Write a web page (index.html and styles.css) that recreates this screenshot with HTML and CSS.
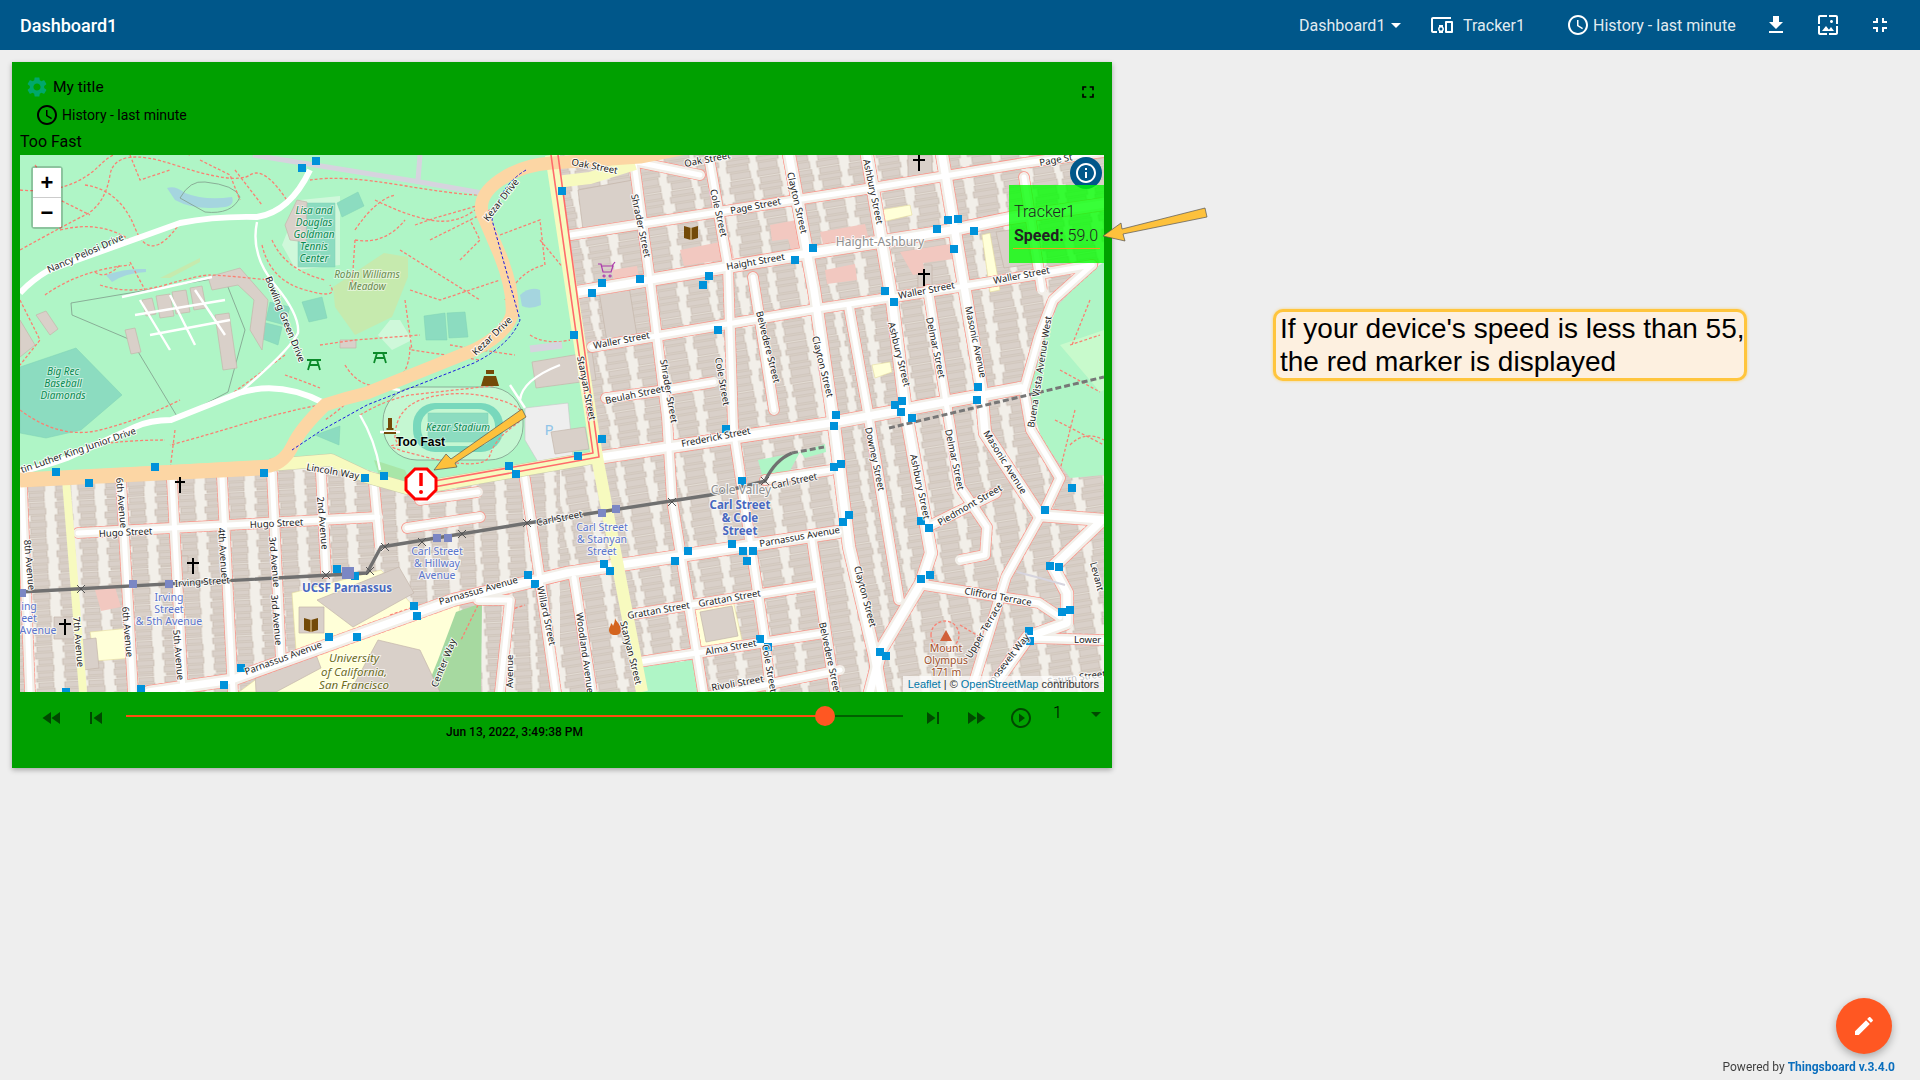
FILE: index.html
```html
<!DOCTYPE html>
<html lang="en">
<head>
    <meta charset="UTF-8">
    <title>Dashboard1</title>
    <link rel="stylesheet" href="styles.css">
</head>
<body>

    <!-- Shared material icons -->
    <svg class="icon-defs">
        <symbol id="i-clock" viewBox="0 0 24 24"><path d="M11.99 2C6.47 2 2 6.48 2 12s4.47 10 9.99 10C17.52 22 22 17.52 22 12S17.52 2 11.99 2zM12 20c-4.42 0-8-3.58-8-8s3.58-8 8-8 8 3.58 8 8-3.58 8-8 8zm.5-13H11v6l5.25 3.15.75-1.23-4.5-2.67z"/></symbol>
    </svg>

    <!-- Header -->
    <header class="topbar">
        <div class="topbar-title">Dashboard1</div>
        <nav class="topbar-tools">
            <span class="tool tool-state">Dashboard1<i class="caret"></i></span>
            <span class="tool tool-entity">
                <svg class="icon-devices" viewBox="0 0 24 24"><path d="M3 6h18V4H3c-1.1 0-2 .9-2 2v12c0 1.1.9 2 2 2h4v-2H3V6zm10 6H9v1.78c-.61.55-1 1.33-1 2.22s.39 1.67 1 2.22V20h4v-1.78c.61-.55 1-1.34 1-2.22s-.39-1.67-1-2.22V12zm-2 5.5c-.83 0-1.5-.67-1.5-1.5s.67-1.5 1.5-1.5 1.5.67 1.5 1.5-.67 1.5-1.5 1.5zM22 8h-6c-.5 0-1 .5-1 1v10c0 .5.5 1 1 1h6c.5 0 1-.5 1-1V9c0-.5-.5-1-1-1zm-1 10h-4v-8h4v8z"/></svg>
                Tracker1
            </span>
            <span class="tool tool-time">
                <svg class="icon-clock"><use href="#i-clock"/></svg>
                History - last minute
            </span>
            <svg class="tool-btn btn-download" viewBox="0 0 24 24"><path d="M19 9h-4V3H9v6H5l7 7 7-7zM5 18v2h14v-2H5z"/></svg>
            <svg class="tool-btn btn-image" viewBox="0 0 24 24"><path d="M4 4h7V2H4c-1.1 0-2 .9-2 2v7h2V4zm6 9l-4 5h12l-3-4-2.03 2.71L10 13zm7-4.5c0-.83-.67-1.5-1.5-1.5S14 7.67 14 8.5s.67 1.5 1.5 1.5S17 9.33 17 8.5zM20 2h-7v2h7v7h2V4c0-1.1-.9-2-2-2zm0 18h-7v2h7c1.1 0 2-.9 2-2v-7h-2v7zM4 13H2v7c0 1.1.9 2 2 2h7v-2H4v-7z"/></svg>
            <svg class="tool-btn btn-exit" viewBox="0 0 24 24"><path d="M5 16h3v3h2v-5H5v2zm3-8H5v2h5V5H8v3zm6 11h2v-3h3v-2h-5v5zm2-11V5h-2v5h5V8h-3z"/></svg>
        </nav>
    </header>

    <!-- Main Content -->
    <main class="content">
        <section class="card">
            <div class="card-head">
                <svg class="icon-gear" viewBox="0 0 24 24"><path d="M19.14,12.94c0.04-0.3,0.06-0.61,0.06-0.94c0-0.32-0.02-0.64-0.07-0.94l2.03-1.58c0.18-0.14,0.23-0.41,0.12-0.61 l-1.92-3.32c-0.12-0.22-0.37-0.29-0.59-0.22l-2.39,0.96c-0.5-0.38-1.03-0.7-1.62-0.94L14.4,2.81c-0.04-0.24-0.24-0.41-0.48-0.41 h-3.84c-0.24,0-0.43,0.17-0.47,0.41L9.25,5.35C8.66,5.59,8.12,5.92,7.63,6.29L5.24,5.33c-0.22-0.08-0.47,0-0.59,0.22L2.74,8.87 C2.62,9.08,2.66,9.34,2.86,9.48l2.03,1.58C4.84,11.36,4.8,11.69,4.8,12s0.02,0.64,0.07,0.94l-2.03,1.58 c-0.18,0.14-0.23,0.41-0.12,0.61l1.92,3.32c0.12,0.22,0.37,0.29,0.59,0.22l2.39-0.96c0.5,0.38,1.03,0.7,1.62,0.94l0.36,2.54 c0.05,0.24,0.24,0.41,0.48,0.41h3.84c0.24,0,0.44-0.17,0.47-0.41l0.36-2.54c0.59-0.24,1.13-0.56,1.62-0.94l2.39,0.96 c0.22,0.08,0.47,0,0.59-0.22l1.92-3.32c0.12-0.22,0.07-0.47-0.12-0.61L19.14,12.94z M12,15.6c-1.98,0-3.6-1.62-3.6-3.6 s1.62-3.6,3.6-3.6s3.6,1.62,3.6,3.6S13.98,15.6,12,15.6z"/></svg>
                <span class="card-title">My title</span>
                <svg class="icon-full" viewBox="0 0 24 24"><path d="M7 14H5v5h5v-2H7v-3zm-2-4h2V7h3V5H5v5zm12 7h-3v2h5v-5h-2v3zM14 5v2h3v3h2V5h-5z"/></svg>
            </div>
            <div class="card-time">
                <svg class="icon-clock"><use href="#i-clock"/></svg>
                History - last minute
            </div>
            <div class="card-label">Too Fast</div>

            <!-- Map -->
            <div class="map">
                <svg class="map-svg" viewBox="20 155 1084 537">
                    <defs>
                        <pattern id="houses-east" width="60" height="42" patternUnits="userSpaceOnUse" patternTransform="rotate(-9)">
                            <g class="house">
                                <rect x="3" y="0" width="20" height="6"/><rect x="1" y="7" width="23" height="5"/><rect x="4" y="13" width="18" height="7"/><rect x="2" y="21" width="22" height="5"/><rect x="3" y="27" width="19" height="7"/><rect x="1" y="35" width="22" height="6"/>
                                <rect x="33" y="0" width="22" height="5"/><rect x="31" y="6" width="25" height="6"/><rect x="35" y="13" width="19" height="7"/><rect x="32" y="21" width="23" height="5"/><rect x="31" y="27" width="22" height="6"/><rect x="34" y="34" width="20" height="7"/>
                            </g>
                        </pattern>
                        <pattern id="houses-west" width="50" height="36" patternUnits="userSpaceOnUse" patternTransform="rotate(-3)">
                            <g class="house">
                                <rect x="3" y="0" width="15" height="5"/><rect x="1" y="6" width="18" height="6"/><rect x="4" y="13" width="14" height="5"/><rect x="2" y="19" width="17" height="6"/><rect x="3" y="26" width="15" height="5"/><rect x="1" y="32" width="17" height="3"/>
                                <rect x="29" y="0" width="16" height="6"/><rect x="31" y="7" width="14" height="5"/><rect x="28" y="13" width="18" height="6"/><rect x="30" y="20" width="15" height="5"/><rect x="29" y="26" width="16" height="6"/><rect x="31" y="33" width="14" height="2"/>
                            </g>
                        </pattern>

                        <!-- Street centre lines, drawn three times below -->
                        <g id="streets-minor">
                            <path d="M571 235L731 210 860 190 1024 163 1104 152"/>
                            <path d="M592 347L810 310 953 288 1046 273 1092 265"/>
                            <path d="M606 398L667 390 714 382"/>
                            <path d="M78 533L378 517"/>
                            <path d="M628 615L817 585"/>
                            <path d="M639 662L824 633"/>
                            <path d="M690 700L840 670"/>
                            <path d="M924 585L1039 603 1060 617"/>
                            <path d="M931 525L996 493"/>
                            <path d="M710 163L728 267 733 427 764 633 771 692"/>
                            <path d="M633 155L649 273 667 417 672 500 703 692"/>
                            <path d="M753 277L774 410"/>
                            <path d="M812 540L835 692"/>
                            <path d="M849 307L867 407 899 600"/>
                            <path d="M928 290L944 390 960 487 987 527 985 555 960 560"/>
                            <path d="M1024 177L1042 290"/>
                            <path d="M22 487L30 692"/>
                            <path d="M121 480L133 692"/>
                            <path d="M172 480L183 692"/>
                            <path d="M222 477L233 692"/>
                            <path d="M272 473L281 660"/>
                            <path d="M321 473L326 573"/>
                            <path d="M374 483L380 547"/>
                            <path d="M524 473L539 573 556 692"/>
                            <path d="M574 578L592 692"/>
                            <path d="M420 500L478 492"/>
                            <path d="M407 528L480 517"/>
                            <path d="M971 692L1006 577 1039 518"/>
                            <path d="M1030 638L1104 640"/>
                            <path d="M1092 265L1053 300 1039 337 1024 390 1031 430 1060 478 1045 510"/>
                            <path d="M765 480L831 470"/>
                            <path d="M603 155L700 175"/>
                            <path d="M478 600L510 600 500 692"/>
                        </g>
                        <g id="streets-major">
                            <path d="M578 292L810 253 953 230 1010 218 1104 204"/>
                            <path d="M603 457L831 423 1021 388"/>
                            <path d="M149 692L231 680 453 600 567 573 838 532"/>
                            <path d="M789 155L814 290 835 433 849 547 874 653 881 692"/>
                            <path d="M867 155L892 300 906 413 931 553 921 583 881 650 870 692"/>
                            <path d="M942 155L981 387 985 433 1039 515 1104 520"/>
                            <path d="M989 692L1028 637 1067 623 1067 593 1053 567 1099 523"/>
                        </g>
                    </defs>

                    <!-- Ground and houses -->
                    <rect class="land" x="20" y="155" width="1084" height="537"/>
                    <rect x="560" y="155" width="544" height="537" fill="url(#houses-east)"/>
                    <rect x="20" y="470" width="540" height="222" fill="url(#houses-west)"/>

                    <!-- Parks and grounds -->
                    <path class="park" d="M20 155H551L600 455 437 492 400 480 330 458 270 462 20 475Z"/>
                    <path class="park" d="M1104 262L1092 270 1058 305 1042 345 1028 395 1042 440 1070 478 1104 475Z"/>
                    <path class="park-light" d="M1104 330L1060 345 1100 392 1104 390Z"/>
                    <path class="park" d="M640 667L694 660 697 692 642 692Z"/>
                    <path class="park" d="M758 460L800 452 786 478 764 482Z"/>
                    <path class="park" d="M800 452L825 444 826 452 805 458Z"/>
                    <path class="campus" d="M292 593L381 570 414 607 460 603 456 640 431 692 239 692 296 650Z"/>
                    <path class="grass" d="M456 612L482 603 481 692 425 692 438 660Z"/>
                    <path class="campus" d="M694 608L733 600 742 640 702 652Z"/>
                    <path class="campus" d="M90 632L130 628 132 658 95 661Z"/>
                    <path class="campus" d="M880 210L910 205 912 215 882 222Z"/>
                    <path class="campus" d="M982 235L990 233 1000 290 990 292Z"/>
                    <path class="campus" d="M872 365L890 362 892 372 875 378Z"/>
                    <path class="meadow" d="M333 287L384 253 408 257 408 277 392 317 355 335 335 307Z"/>
                    <path class="meadow" d="M160 278L200 258 200 262 170 278Z"/>
                    <path class="pitch" d="M20 367L76 348 122 395 81 430 46 438 20 433Z"/>
                    <path class="pale" d="M282 245L300 200 340 196 340 265 296 270Z"/>
                    <path class="pitch" d="M298 203h37v64h-37z"/>
                    <path class="pitch" d="M337 203L358 192 364 206 342 217Z"/>
                    <path class="pitch" d="M270 302L290 307 285 325 266 320Z"/>
                    <path class="pitch" d="M262 322L282 327 278 345 260 338Z"/>
                    <path class="pitch" d="M302 302L322 297 327 318 309 322Z"/>
                    <path class="pitch" d="M424 316L445 313 447 340 426 340Z"/>
                    <path class="pitch" d="M447 313L465 312 468 337 449 338Z"/>
                    <path class="pitch" d="M315 435L340 426 339 445Z"/>
                    <path class="pale" d="M390 320L400 320 412 340 392 350 378 335Z"/>
                    <path class="water" d="M167 188Q175 185 185 193 205 201 232 197 235 205 225 207 195 211 175 200Z"/>
                    <path class="water" d="M520 295Q530 286 540 290L541 305Q530 310 522 306Z"/>
                    <path class="water" d="M106 275Q125 268 146 269L146 272Q125 273 112 282Z"/>
                    <path class="outline" d="M180 198Q190 180 205 182 235 185 240 197 232 215 205 212Z"/>
                    <path class="outline" d="M71 303L224 277 245 330 228 392 178 418 131 340 72 315Z"/>

                    <!-- Stadium -->
                    <rect class="stadium-out" x="383" y="387" width="140" height="73" rx="34"/>
                    <rect class="stadium-track" x="413" y="403" width="90" height="49" rx="22"/>
                    <rect class="stadium-in" x="421" y="409" width="74" height="37" rx="17"/>
                    <rect class="pitch" x="428" y="413" width="60" height="29"/>
                    <path class="parking" d="M525 408L568 403 573 457 538 462 525 440Z"/>
                    <path class="pale dotted" d="M374 460L405 470 410 482 380 478Z"/>

                    <!-- Buildings that stand alone -->
                    <g class="building">
                        <path d="M208 277L240 268 268 300 262 350 250 330 254 300 238 285 212 290Z"/>
                        <path d="M142 300l10-2 4 16-10 2zM156 296l14-2 4 22-14 2zM172 292l14-2 4 22-14 2zM190 288l12-2 4 22-12 2z"/>
                        <path d="M215 315l14-2 8 55-14 2z"/>
                        <path d="M125 330l10-2 6 24-10 2z"/>
                        <path d="M36 315l10-4 12 18-8 6z"/>
                        <path d="M20 320l15 25-15 12z"/>
                        <path d="M285 225l12-25 10 2-1 40-16-2z"/>
                        <path d="M340 340h16v8h-16z"/>
                        <path d="M532 362l60-10 4 28-60 8z"/>
                        <path d="M578 190l55-10 6 50-55 8z"/>
                        <path d="M551 432l34-5 4 22-34 5z"/>
                        <path d="M317 600L399 567 414 593 353 627Z"/>
                        <path d="M299 607h25v26h-25z"/>
                        <path d="M350 692L378 640 420 650 440 692Z"/>
                        <path d="M255 672l60-20 6 16-45 24h-20z"/>
                        <path d="M700 612l32-6 6 30-32 6z"/>
                        <path d="M80 640l16-2 3 30-16 2z"/>
                        <path d="M172 556h16v16h-16z"/>
                        <path d="M54 617h20v22h-20z"/>
                        <path d="M908 155h24v22h-24z"/>
                        <path d="M918 265h14v24h-14z"/>
                        <path d="M598 285l30-5 10 62-30 6z"/>
                        <path d="M996 232l28-4 8 36-28 4z"/>
                    </g>
                    <g class="pink-block">
                        <path d="M680 250l50-10 4 18-50 8z"/>
                        <path d="M770 225l32-6 6 38-14 2-6-20-16 2z"/>
                        <path d="M820 232l45-8 3 12-45 8z"/>
                        <path d="M825 270l30-6 2 16-30 4z"/>
                        <path d="M900 252l50-8 3 15-30 4 2 10-12 2z"/>
                        <path d="M612 270l25-4 2 12-25 4z"/>
                        <path d="M95 590l20-3 6 20-20 4z"/>
                    </g>

                    <!-- Footpaths -->
                    <g class="footpath">
                        <path d="M20 190Q70 195 100 165T190 155"/>
                        <path d="M20 250Q65 225 85 215T110 175 175 165 250 175 290 205"/>
                        <path d="M60 230Q100 220 130 240"/>
                        <path d="M85 185Q120 190 135 228T180 223"/>
                        <path d="M35 165L60 200 90 215"/>
                        <path d="M130 155L140 180 170 170"/>
                        <path d="M235 170L262 205"/>
                        <path d="M200 160L230 175 240 200"/>
                        <path d="M310 180Q340 175 400 185T480 195"/>
                        <path d="M375 200Q405 215 430 220T475 210"/>
                        <path d="M355 230Q375 200 395 195"/>
                        <path d="M355 240Q385 245 405 220"/>
                        <path d="M355 240L352 285"/>
                        <path d="M400 250L480 300"/>
                        <path d="M415 225L435 218 480 205"/>
                        <path d="M430 240L500 205"/>
                        <path d="M460 260L480 240 470 220"/>
                        <path d="M500 235L540 220 545 265"/>
                        <path d="M505 300Q520 270 545 265"/>
                        <path d="M410 290L440 300 500 280"/>
                        <path d="M100 285Q130 295 165 285T210 275 270 280"/>
                        <path d="M45 295Q80 270 130 265"/>
                        <path d="M130 262L145 290"/>
                        <path d="M95 272Q105 280 120 265"/>
                        <path d="M20 300L40 340 20 365"/>
                        <path d="M262 245Q270 280 305 290T330 285"/>
                        <path d="M272 240Q285 270 325 280"/>
                        <path d="M320 345L355 340 420 335"/>
                        <path d="M405 300L412 350 480 360"/>
                        <path d="M450 345Q480 350 515 355"/>
                        <path d="M530 335Q545 345 570 340"/>
                        <path d="M540 240L565 270 572 325"/>
                        <path d="M345 365Q360 390 385 385T410 345"/>
                        <path d="M20 410Q60 440 100 430T180 400"/>
                        <path d="M320 405Q290 410 240 425T170 445"/>
                        <path d="M175 430L170 470"/>
                        <path d="M90 445Q130 440 165 440"/>
                        <path d="M285 375Q300 380 320 388"/>
                        <path d="M230 395L285 355"/>
                        <path d="M355 395Q340 410 325 420"/>
                        <path d="M360 415Q385 400 410 395L500 385"/>
                        <path d="M395 438Q395 405 430 397T500 400 515 425 490 455 430 458 398 445Z"/>
                        <path d="M1060 370L1100 392M1070 345L1100 335M1055 420L1104 445M1075 410L1060 470M1090 300L1072 345"/>
                        <path d="M1070 445Q1085 430 1104 440"/>
                        <path d="M478 605L461 640"/>
                        <path d="M510 610L525 605"/>
                        <path d="M390 615L420 605"/>
                        <path d="M945 635m-14 0a14 14 0 1 1 28 0a14 14 0 1 1-28 0"/>
                        <path d="M960 625L985 640"/>
                    </g>

                    <!-- Streets: dashed casing, land gap, white road -->
                    <use href="#streets-minor" class="walk-minor"/>
                    <use href="#streets-major" class="walk-major"/>
                    <use href="#streets-minor" class="gap-minor"/>
                    <use href="#streets-major" class="gap-major"/>
                    <use href="#streets-minor" class="road-minor"/>
                    <use href="#streets-major" class="road-major"/>

                    <!-- Park roads -->
                    <g class="drive">
                        <path d="M20 293Q32 280 49 270L180 223Q215 216 257 217 290 212 310 170"/>
                        <path d="M20 472Q45 466 67 458L135 427Q150 420 171 420L239 393Q280 380 324 403"/>
                    </g>
                    <g class="drive-thin">
                        <path d="M257 222Q250 255 275 285T298 333Q290 350 239 393"/>
                        <path d="M122 297L212 277M135 315L225 300M150 335L230 320M140 300L170 350M170 295L195 345M195 290L225 335"/>
                        <path d="M360 415Q375 440 380 470M380 432H400M400 390L385 388"/>
                        <path d="M520 400Q522 380 560 365M510 385L525 408"/>
                    </g>
                    <path class="paved" d="M253 155L420 182 482 193M420 155L418 180"/>
                    <path class="paved paved-wide" d="M530 349L562 345"/>
                    <path class="paved paved-thin" d="M1017 572L1040 578 1065 585"/>

                    <!-- Main roads -->
                    <path class="road-yellow-case" d="M270 465L331 460 367 477 406 488 437 485 597 457"/>
                    <path class="road-yellow" d="M270 465L331 460 367 477 406 488 437 485 597 457"/>
                    <path class="road-yellow" d="M551 155L597 457 642 692"/>
                    <path class="road-yellow road-narrow" d="M66 480L83 692"/>
                    <path class="road-yellow" d="M556 182L590 178 635 164"/>
                    <path class="road-orange" d="M20 480L270 466Q285 462 293 445T325 405Q345 398 367 393L474 350Q505 335 512 315 514 290 500 255L482 213Q478 195 500 180T551 163L640 157 738 138"/>
                    <path class="road-orange road-wide" d="M20 480L260 468"/>
                    <path class="lane" d="M551 155L593 453 406 486M558 155L599 457 412 491"/>
                    <path class="lane-blue" d="M526 170Q500 185 492 220L506 270 520 320Q510 345 474 363L367 405 322 430 292 450"/>

                    <!-- Rail -->
                    <path class="rail" d="M20 592L367 573 381 547 528 523 710 495 765 481Q775 460 792 453"/>
                    <path class="rail-dash" d="M792 453L824 447M889 428L1104 377"/>
                    <g class="crossing">
                        <path d="M77 585l8 8m0-8l-8 8M322 571l8 8m0-8l-8 8M366 567l8 8m0-8l-8 8M381 543l8 8m0-8l-8 8M418 538l8 8m0-8l-8 8M458 530l8 8m0-8l-8 8M523 519l8 8m0-8l-8 8M668 498l8 8m0-8l-8 8M761 477l8 8m0-8l-8 8"/>
                    </g>

                    <!-- Stops -->
                    <path class="stop" d="M312 157h8v8h-8zM298 164h8v8h-8zM558 187h8v8h-8zM598 279h8v8h-8zM588 289h8v8h-8zM636 275h8v8h-8zM570 331h8v8h-8zM705 272h8v8h-8zM699 281h8v8h-8zM791 256h8v8h-8zM809 244h8v8h-8zM714 326h8v8h-8zM881 287h8v8h-8zM890 298h8v8h-8zM944 216h8v8h-8zM954 215h8v8h-8zM933 225h8v8h-8zM970 227h8v8h-8zM950 245h8v8h-8zM974 383h8v8h-8zM973 396h8v8h-8zM898 397h8v8h-8zM891 401h8v8h-8zM897 408h8v8h-8zM908 414h8v8h-8zM832 411h8v8h-8zM830 422h8v8h-8zM722 425h8v8h-8zM598 435h8v8h-8zM574 452h8v8h-8zM505 462h8v8h-8zM512 470h8v8h-8zM361 474h8v8h-8zM380 472h8v8h-8zM52 468h8v8h-8zM85 479h8v8h-8zM151 463h8v8h-8zM260 469h8v8h-8zM333 565h8v8h-8zM351 572h8v8h-8zM410 602h8v8h-8zM413 612h8v8h-8zM325 633h8v8h-8zM353 633h8v8h-8zM237 664h8v8h-8zM220 681h8v8h-8zM137 685h8v8h-8zM62 688h8v8h-8zM524 571h8v8h-8zM531 580h8v8h-8zM830 463h8v8h-8zM837 460h8v8h-8zM738 477h8v8h-8zM845 511h8v8h-8zM839 518h8v8h-8zM728 540h8v8h-8zM684 547h8v8h-8zM671 557h8v8h-8zM739 547h8v8h-8zM749 547h8v8h-8zM743 557h8v8h-8zM600 560h8v8h-8zM606 567h8v8h-8zM917 517h8v8h-8zM925 524h8v8h-8zM917 575h8v8h-8zM926 571h8v8h-8zM876 648h8v8h-8zM882 652h8v8h-8zM756 635h8v8h-8zM764 643h8v8h-8zM1046 562h8v8h-8zM1055 563h8v8h-8zM1058 608h8v8h-8zM1066 606h8v8h-8zM1025 627h8v8h-8zM1026 637h8v8h-8zM1068 484h8v8h-8zM1041 506h8v8h-8z"/>
                    <path class="stop-rail" d="M129 580h8v8h-8zM165 580h8v8h-8zM342 567h12v12h-12zM18 589h8v8h-8zM433 534h8v8h-8zM444 534h8v8h-8zM598 509h8v8h-8zM612 505h8v8h-8z"/>

                    <!-- Point symbols -->
                    <g class="cross">
                        <path d="M180 477v16M175 482h10M193 558v16M187 563h12M65 619v16M59 624h12M919 154v17M913 160h12M924 269v17M918 274h12"/>
                    </g>
                    <g class="book">
                        <path d="M684 226l7 2 7-2v12l-7 2-7-2zM304 618l7 2 7-2v12l-7 2-7-2z"/>
                        <path class="book-line" d="M691 228v12M311 620v12"/>
                    </g>
                    <path class="pink-cart" d="M598 264h3l2 8h8l2-6h-11M604 275a1 1 0 1 0 .1 0M610 275a1 1 0 1 0 .1 0M612 266l3-4"/>
                    <path class="fire" d="M615 618c1 4 6 6 6 12 0 3-2 5-6 5s-6-2-6-5c0-3 2-4 2-7 1 1 2 2 2 3 1-2 2-5 2-8z"/>
                    <g class="picnic">
                        <path d="M307 360h14M309 365h10M311 360l-3 10M317 360l3 10M373 353h14M375 358h10M377 353l-3 10M383 353l3 10"/>
                    </g>
                    <path class="mountain" d="M946 630l6 11h-12z"/>
                    <path class="statue" d="M388 418h4v10h1.5v2h-7v-2h1.5zM384 432h12v2h-12z"/>
                    <path class="statue" d="M484 376h12l3 10h-18zM486 370h8v4h-8z"/>

                    <!-- Labels -->
                    <g class="lbl">
                        <text transform="translate(49 273) rotate(-24)">Nancy Pelosi Drive</text>
                        <text transform="translate(265 278) rotate(68)">Bowling Green Drive</text>
                        <text transform="translate(488 222) rotate(-52)">Kezar Drive</text>
                        <text transform="translate(476 356) rotate(-44)">Kezar Drive</text>
                        <text transform="translate(571 165) rotate(11)">Oak Street</text>
                        <text transform="translate(685 167) rotate(-11)">Oak Street</text>
                        <text transform="translate(22 473) rotate(-19)">tin Luther King Junior Drive</text>
                        <text transform="translate(306 470) rotate(10)">Lincoln Way</text>
                        <text transform="translate(577 357) rotate(79)">Stanyan Street</text>
                        <text transform="translate(620 622) rotate(76)">Stanyan Street</text>
                        <text transform="translate(631 195) rotate(78)">Shrader Street</text>
                        <text transform="translate(660 360) rotate(80)">Shrader Street</text>
                        <text transform="translate(710 190) rotate(77)">Cole Street</text>
                        <text transform="translate(715 358) rotate(80)">Cole Street</text>
                        <text transform="translate(762 645) rotate(80)">Cole Street</text>
                        <text transform="translate(787 173) rotate(77)">Clayton Street</text>
                        <text transform="translate(812 337) rotate(76)">Clayton Street</text>
                        <text transform="translate(854 567) rotate(75)">Clayton Street</text>
                        <text transform="translate(863 160) rotate(78)">Ashbury Street</text>
                        <text transform="translate(888 323) rotate(76)">Ashbury Street</text>
                        <text transform="translate(910 455) rotate(78)">Ashbury Street</text>
                        <text transform="translate(731 214) rotate(-11)">Page Street</text>
                        <text transform="translate(1040 166) rotate(-10)">Page St</text>
                        <text transform="translate(727 270) rotate(-10)">Haight Street</text>
                        <text transform="translate(594 349) rotate(-11)">Waller Street</text>
                        <text transform="translate(899 299) rotate(-11)">Waller Street</text>
                        <text transform="translate(994 284) rotate(-11)">Waller Street</text>
                        <text transform="translate(756 312) rotate(76)">Belvedere Street</text>
                        <text transform="translate(819 623) rotate(78)">Belvedere Street</text>
                        <text transform="translate(926 318) rotate(78)">Delmar Street</text>
                        <text transform="translate(945 430) rotate(78)">Delmar Street</text>
                        <text transform="translate(965 307) rotate(78)">Masonic Avenue</text>
                        <text transform="translate(983 433) rotate(58)">Masonic Avenue</text>
                        <text transform="translate(1034 428) rotate(-81)">Buena Vista Avenue West</text>
                        <text transform="translate(606 404) rotate(-12)">Beulah Street</text>
                        <text transform="translate(682 447) rotate(-11)">Frederick Street</text>
                        <text transform="translate(772 489) rotate(-12)">Carl Street</text>
                        <text transform="translate(537 526) rotate(-11)">Carl Street</text>
                        <text transform="translate(175 587) rotate(-4)">Irving Street</text>
                        <text transform="translate(246 675) rotate(-20)">Parnassus Avenue</text>
                        <text transform="translate(440 605) rotate(-16)">Parnassus Avenue</text>
                        <text transform="translate(760 547) rotate(-10)">Parnassus Avenue</text>
                        <text transform="translate(99 537) rotate(-3)">Hugo Street</text>
                        <text transform="translate(250 528) rotate(-3)">Hugo Street</text>
                        <text transform="translate(218 528) rotate(86)">4th Avenue</text>
                        <text transform="translate(269 537) rotate(85)">3rd Avenue</text>
                        <text transform="translate(271 595) rotate(85)">3rd Avenue</text>
                        <text transform="translate(317 497) rotate(85)">2nd Avenue</text>
                        <text transform="translate(116 478) rotate(85)">6th Avenue</text>
                        <text transform="translate(122 607) rotate(85)">6th Avenue</text>
                        <text transform="translate(24 540) rotate(85)">8th Avenue</text>
                        <text transform="translate(73 617) rotate(85)">7th Avenue</text>
                        <text transform="translate(173 630) rotate(85)">5th Avenue</text>
                        <text transform="translate(537 587) rotate(78)">Willard Street</text>
                        <text transform="translate(437 688) rotate(-68)">Center Way</text>
                        <text transform="translate(513 688) rotate(-90)">Avenue</text>
                        <text transform="translate(576 613) rotate(82)">Woodland Avenue</text>
                        <text transform="translate(628 619) rotate(-10)">Grattan Street</text>
                        <text transform="translate(699 607) rotate(-10)">Grattan Street</text>
                        <text transform="translate(706 655) rotate(-10)">Alma Street</text>
                        <text transform="translate(712 691) rotate(-10)">Rivoli Street</text>
                        <text transform="translate(865 428) rotate(78)">Downey Street</text>
                        <text transform="translate(964 594) rotate(10)">Clifford Terrace</text>
                        <text transform="translate(940 526) rotate(-30)">Piedmont Street</text>
                        <text transform="translate(971 659) rotate(-60)">Upper Terrace</text>
                        <text transform="translate(990 688) rotate(-52)">Roosevelt Way</text>
                        <text transform="translate(1074 643)">Lower</text>
                        <text transform="translate(1090 563) rotate(75)">Levant</text>
                        <text transform="translate(1048 685) rotate(-8)">Saturn Street</text>
                    </g>
                    <g class="lbl-park">
                        <text x="314" y="214">Lisa and</text>
                        <text x="314" y="226">Douglas</text>
                        <text x="314" y="238">Goldman</text>
                        <text x="314" y="250">Tennis</text>
                        <text x="314" y="262">Center</text>
                        <text x="63" y="375">Big Rec</text>
                        <text x="63" y="387">Baseball</text>
                        <text x="63" y="399">Diamonds</text>
                        <text x="458" y="431">Kezar Stadium</text>
                    </g>
                    <g class="lbl-meadow">
                        <text x="367" y="278">Robin Williams</text>
                        <text x="367" y="290">Meadow</text>
                    </g>
                    <g class="lbl-stop">
                        <text x="602" y="531">Carl Street</text>
                        <text x="602" y="543">&amp; Stanyan</text>
                        <text x="602" y="555">Street</text>
                        <text x="437" y="555">Carl Street</text>
                        <text x="437" y="567">&amp; Hillway</text>
                        <text x="437" y="579">Avenue</text>
                        <text x="169" y="601">Irving</text>
                        <text x="169" y="613">Street</text>
                        <text x="169" y="625">&amp; 5th Avenue</text>
                        <text x="29" y="610">ing</text>
                        <text x="29" y="622">eet</text>
                        <text x="38" y="634">Avenue</text>
                    </g>
                    <g class="lbl-stop lbl-stop-big">
                        <text x="740" y="509">Carl Street</text>
                        <text x="740" y="522">&amp; Cole</text>
                        <text x="740" y="535">Street</text>
                        <text x="347" y="592">UCSF Parnassus</text>
                    </g>
                    <g class="lbl-uni">
                        <text x="354" y="662">University</text>
                        <text x="354" y="676">of California,</text>
                        <text x="354" y="689">San Francisco</text>
                    </g>
                    <g class="lbl-mount">
                        <text x="946" y="652">Mount</text>
                        <text x="946" y="664">Olympus</text>
                        <text x="946" y="676">171 m</text>
                    </g>
                    <text class="lbl-area" x="880" y="246">Haight-Ashbury</text>
                    <text class="lbl-area" x="741" y="494">Cole Valley</text>
                    <text class="lbl-p" x="549" y="435">P</text>

                    <!-- Device marker -->
                    <polygon class="pin" points="415,469 427,469 436,478 436,490 427,499 415,499 406,490 406,478"/>
                    <path class="pin-mark" d="M421 473V486"/>
                    <circle class="pin-dot" cx="421" cy="492" r="2"/>
                    <text class="pin-label" x="396" y="446">Too Fast</text>
                    <polygon class="callout-arrow" points="434,470 446,454 451,459 522,409 526,417 455,463 457,467"/>
                </svg>

                <div class="zoom-box">
                    <div class="zoom-btn zoom-in">+</div>
                    <div class="zoom-btn">&minus;</div>
                </div>
                <div class="info-btn">
                    <svg viewBox="0 0 24 24"><path d="M11 7h2v2h-2zm0 4h2v6h-2zm1-9C6.48 2 2 6.48 2 12s4.48 10 10 10 10-4.48 10-10S17.52 2 12 2zm0 18c-4.41 0-8-3.59-8-8s3.59-8 8-8 8 3.59 8 8-3.59 8-8 8z"/></svg>
                </div>
                <div class="tracker-tip">
                    <div class="tip-name">Tracker1</div>
                    <div class="tip-speed"><b>Speed:</b> 59.0</div>
                    <div class="tip-line"></div>
                </div>
                <div class="attribution"><a href="#">Leaflet</a> | &copy; <a href="#">OpenStreetMap</a> contributors</div>
            </div>

            <!-- Playback controls -->
            <div class="player">
                <svg class="ctl ctl-rewind" viewBox="0 0 24 24"><path d="M11 18V6l-8.5 6 8.5 6zm.5-6l8.5 6V6l-8.5 6z"/></svg>
                <svg class="ctl ctl-prev" viewBox="0 0 24 24"><path d="M6 6h2v12H6zm3.5 6l8.5 6V6z"/></svg>
                <div class="timeline">
                    <div class="track">
                        <div class="track-done"></div>
                        <div class="track-thumb"></div>
                    </div>
                    <div class="time-label">Jun 13, 2022, 3:49:38 PM</div>
                </div>
                <svg class="ctl ctl-next" viewBox="0 0 24 24"><path d="M6 18l8.5-6L6 6v12zM16 6v12h2V6h-2z"/></svg>
                <svg class="ctl ctl-forward" viewBox="0 0 24 24"><path d="M4 18l8.5-6L4 6v12zm9-12v12l8.5-6L13 6z"/></svg>
                <svg class="ctl ctl-play" viewBox="0 0 24 24"><path d="M10 16.5l6-4.5-6-4.5v9zM12 2C6.48 2 2 6.48 2 12s4.48 10 10 10 10-4.48 10-10S17.52 2 12 2zm0 18c-4.41 0-8-3.59-8-8s3.59-8 8-8 8 3.59 8 8-3.59 8-8 8z"/></svg>
                <span class="speed-value">1</span>
                <i class="speed-caret"></i>
            </div>
        </section>

        <!-- Annotations on top of the page -->
        <svg class="note-arrow" viewBox="0 0 110 44"><polygon points="3,36 21,23 22,29 105,8 107,17 23,34 25,41"/></svg>
        <div class="note">If your device's speed is less than 55,<br>the red marker is displayed</div>
    </main>

    <!-- Edit button and footer -->
    <div class="fab">
        <svg viewBox="0 0 24 24"><path d="M3 17.25V21h3.75L17.81 9.94l-3.75-3.75L3 17.25zM20.71 7.04c.39-.39.39-1.02 0-1.41l-2.34-2.34c-.39-.39-1.02-.39-1.41 0l-1.83 1.83 3.75 3.75 1.83-1.83z"/></svg>
    </div>
    <footer class="powered">Powered by <a href="#">Thingsboard v.3.4.0</a></footer>

</body>
</html>
```

FILE: styles.css
```css
/* General Body Style */
body {
    margin: 0;
    height: 1080px;
    overflow: hidden;
    background-color: #eeeeee;
    font-family: Roboto, "Liberation Sans", sans-serif;
    color: #000;
}

.icon-defs {
    display: none;
}

/* Header */
.topbar {
    height: 50px;
    background-color: #00578a;
    color: #fff;
    display: flex;
    align-items: center;
    justify-content: space-between;
    padding: 0 20px;
}

.topbar-title {
    font-size: 18px;
    font-weight: 500;
}

.topbar-tools {
    display: flex;
    align-items: center;
    font-size: 16px;
    color: rgba(255, 255, 255, 0.9);
}

.tool {
    display: flex;
    align-items: center;
}

.tool svg {
    fill: #fff;
}

.tool-state {
    width: 131px;
}

.caret {
    margin-left: 6px;
    border-left: 5px solid transparent;
    border-right: 5px solid transparent;
    border-top: 5px solid #fff;
}

.tool-entity {
    width: 136px;
    gap: 9px;
}

.icon-devices {
    width: 24px;
    height: 24px;
}

.tool-time {
    width: 198px;
    gap: 3px;
}

.tool-time .icon-clock {
    width: 24px;
    height: 24px;
}

.tool-btn {
    fill: #fff;
    width: 24px;
    height: 24px;
}

.btn-download {
    margin-right: 28px;
}

.btn-image {
    margin-right: 28px;
}

.btn-exit {
    margin-right: 8px;
}

/* Main content */
.content {
    position: relative;
    padding: 12px;
}

.card {
    width: 1100px;
    height: 706px;
    background-color: #00a000;
    box-shadow: 0 2px 5px rgba(0, 0, 0, 0.3);
    display: flex;
    flex-direction: column;
    padding: 0 8px;
    box-sizing: border-box;
}

.card-head {
    height: 24px;
    padding-top: 13px;
    display: flex;
    align-items: center;
    font-size: 16px;
}

.icon-gear {
    width: 24px;
    height: 24px;
    margin-left: 5px;
    fill: #00a86b;
}

.card-title {
    margin-left: 4px;
    flex: 1;
    font-size: 15.5px;
}

.icon-full {
    width: 20px;
    height: 20px;
    margin-right: 6px;
    margin-top: 9px;
}

.card-time {
    margin-top: 4px;
    margin-left: 15px;
    height: 24px;
    display: flex;
    align-items: center;
    gap: 3px;
    font-size: 14px;
}

.card-time .icon-clock {
    width: 24px;
    height: 24px;
}

.card-label {
    font-size: 16px;
    line-height: 20px;
    margin-top: 5px;
    height: 20px;
}

/* Map */
.map {
    position: relative;
    width: 1084px;
    height: 537px;
    margin-top: 3px;
    overflow: hidden;
    background-color: #f2efe9;
}

.map-svg {
    display: block;
    width: 1084px;
    height: 537px;
}

.land {
    fill: #f2efe9;
}

.house rect {
    fill: #d9d0c9;
    stroke: #c4b6ab;
    stroke-width: 0.7;
}

.park {
    fill: #aff5c6;
}

.park-light {
    fill: #c8facc;
}

.grass {
    fill: #a6d9a0;
}

.campus {
    fill: #ffffd8;
    stroke: #e6dc9e;
    stroke-width: 0.6;
}

.meadow {
    fill: #c6eaae;
}

.pitch {
    fill: #8cdcc0;
    stroke: #7fd3b4;
    stroke-width: 0.5;
}

.pale {
    fill: #cff8da;
}

.dotted {
    fill: #a8e6a8;
}

.water {
    fill: #a5d5df;
}

.outline {
    fill: none;
    stroke: #7f9c8a;
    stroke-width: 0.8;
}

.stadium-out {
    fill: #c5f7d2;
    stroke: #7f9c8a;
    stroke-width: 0.8;
}

.stadium-track {
    fill: #78d8bc;
}

.stadium-in {
    fill: #c5f7d2;
}

.parking {
    fill: #eeeeee;
    stroke: #c8c8c8;
    stroke-width: 0.6;
}

.building path {
    fill: #d9d0c9;
    stroke: #c4b6ab;
    stroke-width: 0.7;
}

.pink-block path {
    fill: #f2c8c0;
}

.footpath path {
    fill: none;
    stroke: #fa8072;
    stroke-width: 1.3;
    stroke-dasharray: 3 2;
}

/* Streets */
#streets-minor path,
#streets-major path {
    fill: none;
    stroke-linecap: round;
    stroke-linejoin: round;
}

.walk-minor {
    stroke: #fb9388;
    stroke-width: 11.5;
    stroke-dasharray: 2.5 3;
}

.walk-major {
    stroke: #fb9388;
    stroke-width: 14;
    stroke-dasharray: 2.5 3;
}

.gap-minor {
    stroke: #f2efe9;
    stroke-width: 10;
}

.gap-major {
    stroke: #f2efe9;
    stroke-width: 12.5;
}

.road-minor {
    stroke: #fff;
    stroke-width: 5;
}

.road-major {
    stroke: #fff;
    stroke-width: 7.5;
}

.drive path,
.drive-thin path,
.paved,
.road-yellow,
.road-yellow-case,
.road-orange,
.lane,
.lane-blue,
.rail,
.rail-dash {
    fill: none;
    stroke-linejoin: round;
}

.drive path {
    stroke: #fff;
    stroke-width: 6;
}

.drive-thin path {
    stroke: #fff;
    stroke-width: 2.4;
}

.paved {
    stroke: #d6d4de;
    stroke-width: 5;
}

.paved-wide {
    stroke-width: 7;
}

.paved-thin {
    stroke-width: 2;
}

.road-yellow {
    stroke: #f7fabf;
    stroke-width: 12;
}

.road-narrow {
    stroke-width: 8;
}

.road-yellow-case {
    stroke: #c8ccaa;
    stroke-width: 13;
}

.road-orange {
    stroke: #fcd6a4;
    stroke-width: 13;
}

.road-wide {
    stroke-width: 15;
}

.lane {
    stroke: #ff6b6b;
    stroke-width: 1.6;
}

.lane-blue {
    stroke: #1a1ae0;
    stroke-width: 1;
    stroke-dasharray: 3 2;
}

.rail {
    stroke: #707070;
    stroke-width: 3.4;
}

.rail-dash {
    stroke: #777;
    stroke-width: 3;
    stroke-dasharray: 6 3;
}

.crossing path {
    fill: none;
    stroke: #555;
    stroke-width: 1;
}

.stop {
    fill: #0092da;
}

.stop-rail {
    fill: #7b87c4;
}

.cross path {
    fill: none;
    stroke: #000;
    stroke-width: 2;
}

.book path {
    fill: #734a08;
}

.book .book-line {
    fill: none;
    stroke: #f4d9a4;
    stroke-width: 1;
}

.pink-cart {
    fill: none;
    stroke: #ac39ac;
    stroke-width: 1.2;
}

.fire {
    fill: #d4641e;
}

.picnic path {
    fill: none;
    stroke: #0b8a2a;
    stroke-width: 1.8;
}

.mountain {
    fill: #d1603a;
}

.statue {
    fill: #734a08;
}

/* Map labels */
.map-svg text {
    font-family: "Noto Sans", "Liberation Sans", sans-serif;
}

.lbl text {
    font-size: 9.5px;
    fill: #222;
    stroke: rgba(255, 255, 255, 0.85);
    stroke-width: 2px;
    paint-order: stroke;
}

.lbl-park text {
    font-size: 10px;
    font-style: italic;
    text-anchor: middle;
    fill: #0a8a50;
    stroke: rgba(255, 255, 255, 0.5);
    stroke-width: 2px;
    paint-order: stroke;
}

.lbl-meadow text {
    font-size: 10px;
    font-style: italic;
    text-anchor: middle;
    fill: #6a8a50;
    stroke: rgba(255, 255, 255, 0.5);
    stroke-width: 2px;
    paint-order: stroke;
}

.lbl-stop text {
    font-size: 10.5px;
    text-anchor: middle;
    fill: #5b75cc;
    stroke: rgba(255, 255, 255, 0.7);
    stroke-width: 2px;
    paint-order: stroke;
}

.lbl-stop-big text {
    font-size: 11.5px;
    font-weight: 700;
    fill: #4868c0;
}

.lbl-uni text {
    font-size: 11.5px;
    font-style: italic;
    text-anchor: middle;
    fill: #6e6e1e;
    stroke: rgba(255, 255, 255, 0.7);
    stroke-width: 2px;
    paint-order: stroke;
}

.lbl-mount text {
    font-size: 10.5px;
    text-anchor: middle;
    fill: #a0522d;
    stroke: rgba(255, 255, 255, 0.7);
    stroke-width: 2px;
    paint-order: stroke;
}

.lbl-area {
    font-size: 12px;
    text-anchor: middle;
    fill: #8f8f8f;
    stroke: rgba(255, 255, 255, 0.85);
    stroke-width: 2px;
    paint-order: stroke;
}

.lbl-p {
    font-size: 15px;
    text-anchor: middle;
    fill: #90c4e8;
}

/* Device marker */
.pin {
    fill: #fff;
    stroke: #f00;
    stroke-width: 3;
}

.pin-mark {
    fill: none;
    stroke: #f00;
    stroke-width: 3.5;
}

.pin-dot {
    fill: #f00;
}

.map-svg .pin-label {
    font-family: "Liberation Sans", sans-serif;
    font-size: 12px;
    font-weight: 700;
    fill: #000;
    stroke: rgba(255, 255, 255, 0.4);
    stroke-width: 2px;
    paint-order: stroke;
}

.callout-arrow,
.note-arrow polygon {
    fill: #fdc13c;
    stroke: #555;
    stroke-width: 0.7;
}

/* Map controls */
.zoom-box {
    position: absolute;
    left: 11px;
    top: 11px;
    border: 2px solid rgba(0, 0, 0, 0.2);
    border-radius: 4px;
    background-clip: padding-box;
}

.zoom-btn {
    width: 28px;
    height: 29px;
    background: #fff;
    font-family: "Liberation Sans", sans-serif;
    font-size: 22px;
    font-weight: 700;
    line-height: 29px;
    text-align: center;
    color: #000;
}

.zoom-in {
    border-bottom: 1px solid #ccc;
}

.info-btn {
    position: absolute;
    left: 1050px;
    top: 2px;
    width: 32px;
    height: 32px;
    border-radius: 50%;
    background-color: #00578a;
    display: flex;
    align-items: center;
    justify-content: center;
}

.info-btn svg {
    width: 24px;
    height: 24px;
    fill: #fff;
}

.tracker-tip {
    position: absolute;
    right: 0;
    top: 30px;
    width: 95px;
    height: 78px;
    box-sizing: border-box;
    padding: 15px 0 0 5px;
    background-color: rgba(0, 255, 0, 0.78);
    font-size: 16px;
    font-weight: 300;
    line-height: 24px;
    color: #222;
    white-space: nowrap;
}

.tip-name {
    height: 24px;
}

.tip-speed {
    height: 24px;
}

.tip-speed b {
    font-weight: 700;
}

.tip-line {
    width: 87px;
    height: 1px;
    margin-left: -1px;
    background-color: #f0a020;
}

.attribution {
    position: absolute;
    right: 0;
    bottom: 0;
    height: 16px;
    padding: 0 5px;
    background: rgba(255, 255, 255, 0.7);
    font-family: "Liberation Sans", sans-serif;
    font-size: 11px;
    line-height: 16px;
    color: #333;
}

.attribution a {
    color: #0078a8;
    text-decoration: none;
}

/* Playback controls */
.player {
    display: flex;
    align-items: flex-start;
    padding-top: 14px;
}

.ctl {
    width: 24px;
    height: 24px;
    flex: none;
    fill: rgba(0, 0, 0, 0.54);
}

.ctl-rewind {
    margin-left: 20px;
}

.ctl-prev {
    margin-left: 20px;
}

.ctl-next {
    margin-left: 18px;
}

.ctl-forward {
    margin-left: 19px;
}

.ctl-play {
    margin-left: 21px;
}

.timeline {
    width: 777px;
    margin-left: 18px;
}

.track {
    position: relative;
    height: 2px;
    margin-top: 9px;
    background-color: rgba(0, 0, 0, 0.4);
}

.track-done {
    width: 90%;
    height: 2px;
    background-color: #ff4d10;
}

.track-thumb {
    position: absolute;
    left: 689px;
    top: -9px;
    width: 20px;
    height: 20px;
    border-radius: 50%;
    background-color: #ff5722;
}

.time-label {
    margin-top: 8px;
    font-size: 12px;
    font-weight: 500;
    line-height: 14px;
    text-align: center;
}

.speed-value {
    margin-left: 20px;
    font-size: 16px;
    font-weight: 300;
    line-height: 14px;
    width: 38px;
}

.speed-caret {
    margin-top: 6px;
    border-left: 5px solid transparent;
    border-right: 5px solid transparent;
    border-top: 5px solid rgba(0, 0, 0, 0.54);
}

/* Annotations */
.note-arrow {
    position: absolute;
    left: 1100px;
    top: 150px;
    width: 110px;
    height: 44px;
    overflow: visible;
}

.note {
    position: absolute;
    left: 1273px;
    top: 259px;
    width: 474px;
    height: 72px;
    box-sizing: border-box;
    padding: 0 0 0 4px;
    border: 3px solid #ffc53d;
    border-radius: 10px;
    background-color: #fdf0e0;
    box-shadow: 0 0 3px rgba(255, 197, 61, 0.7);
    font-family: "Liberation Sans", sans-serif;
    font-size: 28px;
    line-height: 33px;
    white-space: nowrap;
}

/* Edit button */
.fab {
    position: fixed;
    left: 1836px;
    top: 998px;
    width: 56px;
    height: 56px;
    border-radius: 50%;
    background-color: #ff5722;
    box-shadow: 0 3px 8px rgba(0, 0, 0, 0.3);
    display: flex;
    align-items: center;
    justify-content: center;
}

.fab svg {
    width: 24px;
    height: 24px;
    fill: #fff;
}

/* Footer */
.powered {
    position: fixed;
    right: 25px;
    top: 1060px;
    font-size: 12px;
    line-height: 14px;
    color: rgba(0, 0, 0, 0.75);
}

.powered a {
    color: #0a6ebd;
    font-weight: 700;
    text-decoration: none;
}
```
